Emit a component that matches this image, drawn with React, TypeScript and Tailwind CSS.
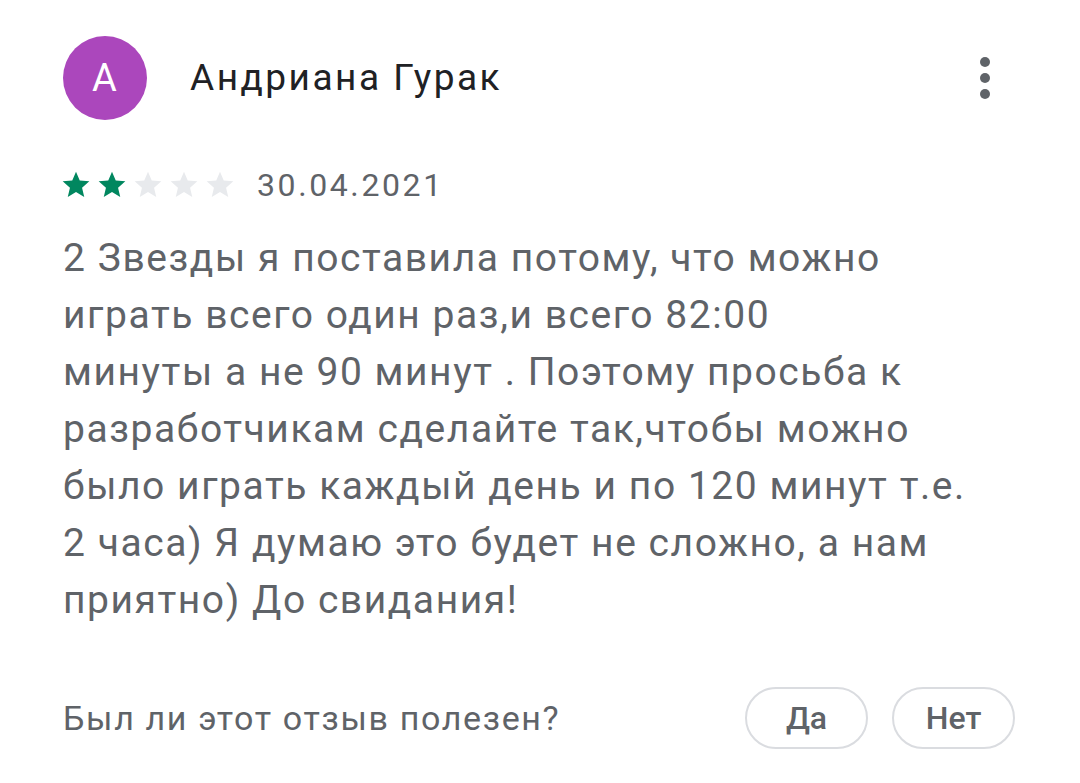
import React from "react";

const Star = ({ filled }: { filled: boolean }) => (
  <svg width="32" height="32" viewBox="0 0 24 24">
    <path
      d="M12 17.27L18.18 21l-1.64-7.03L22 9.24l-7.19-.61L12 2 9.19 8.63 2 9.24l5.46 4.73L5.82 21z"
      fill={filled ? "#01875f" : "#e8eaed"}
    />
  </svg>
);

export default function App() {
  const lines = [
    "2 Звезды я поставила потому, что можно",
    "играть всего один раз,и всего 82:00",
    "минуты а не 90 минут . Поэтому просьба к",
    "разработчикам сделайте так,чтобы можно",
    "было играть каждый день и по 120 минут т.е.",
    "2 часа) Я думаю это будет не сложно, а нам",
    "приятно) До свидания!",
  ];
  return (
    <div
      className="w-[1080px] h-[783px] bg-white overflow-hidden"
      style={{ fontFamily: "Roboto, 'Noto Sans', sans-serif" }}
    >
      <div className="pl-[63px] pr-[65px] pt-[36px]">
        <div className="flex items-center h-[84px]">
          <div className="w-[84px] h-[84px] rounded-full bg-[#ab47bc] flex items-center justify-center text-white text-[38px] tracking-[1px]">
            A
          </div>
          <div className="ml-[43px] text-[37px] text-[#202124] tracking-[2.5px]">Андриана Гурак</div>
          <div className="ml-auto mr-[25px] flex flex-col gap-[6px]">
            <span className="w-[10px] h-[10px] rounded-full bg-[#5f6368]" />
            <span className="w-[10px] h-[10px] rounded-full bg-[#5f6368]" />
            <span className="w-[10px] h-[10px] rounded-full bg-[#5f6368]" />
          </div>
        </div>
        <div className="flex items-center mt-[50px] h-[30px]">
          <div className="flex -ml-[3px] gap-[4px]">
            <Star filled />
            <Star filled />
            <Star filled={false} />
            <Star filled={false} />
            <Star filled={false} />
          </div>
          <div className="ml-[21px] text-[32px] text-[#5f6368] tracking-[2.6px]">30.04.2021</div>
        </div>
        <div className="mt-[30px] text-[39px] leading-[57px] text-[#5f6368] tracking-[1.55px]">
          {lines.map((l, i) => (
            <div key={i} className="whitespace-nowrap">{l}</div>
          ))}
        </div>
        <div className="flex items-center mt-[58px]">
          <div className="text-[34px] text-[#5f6368] tracking-[1.65px]">Был ли этот отзыв полезен?</div>
          <div className="ml-auto flex gap-[24px]">
            <button className="w-[123px] h-[62px] rounded-full border-2 border-[#dadce0] text-[32px] font-medium text-[#5f6368]">
              Да
            </button>
            <button className="w-[123px] h-[62px] rounded-full border-2 border-[#dadce0] text-[32px] font-medium text-[#5f6368]">
              Нет
            </button>
          </div>
        </div>
      </div>
    </div>
  );
}
